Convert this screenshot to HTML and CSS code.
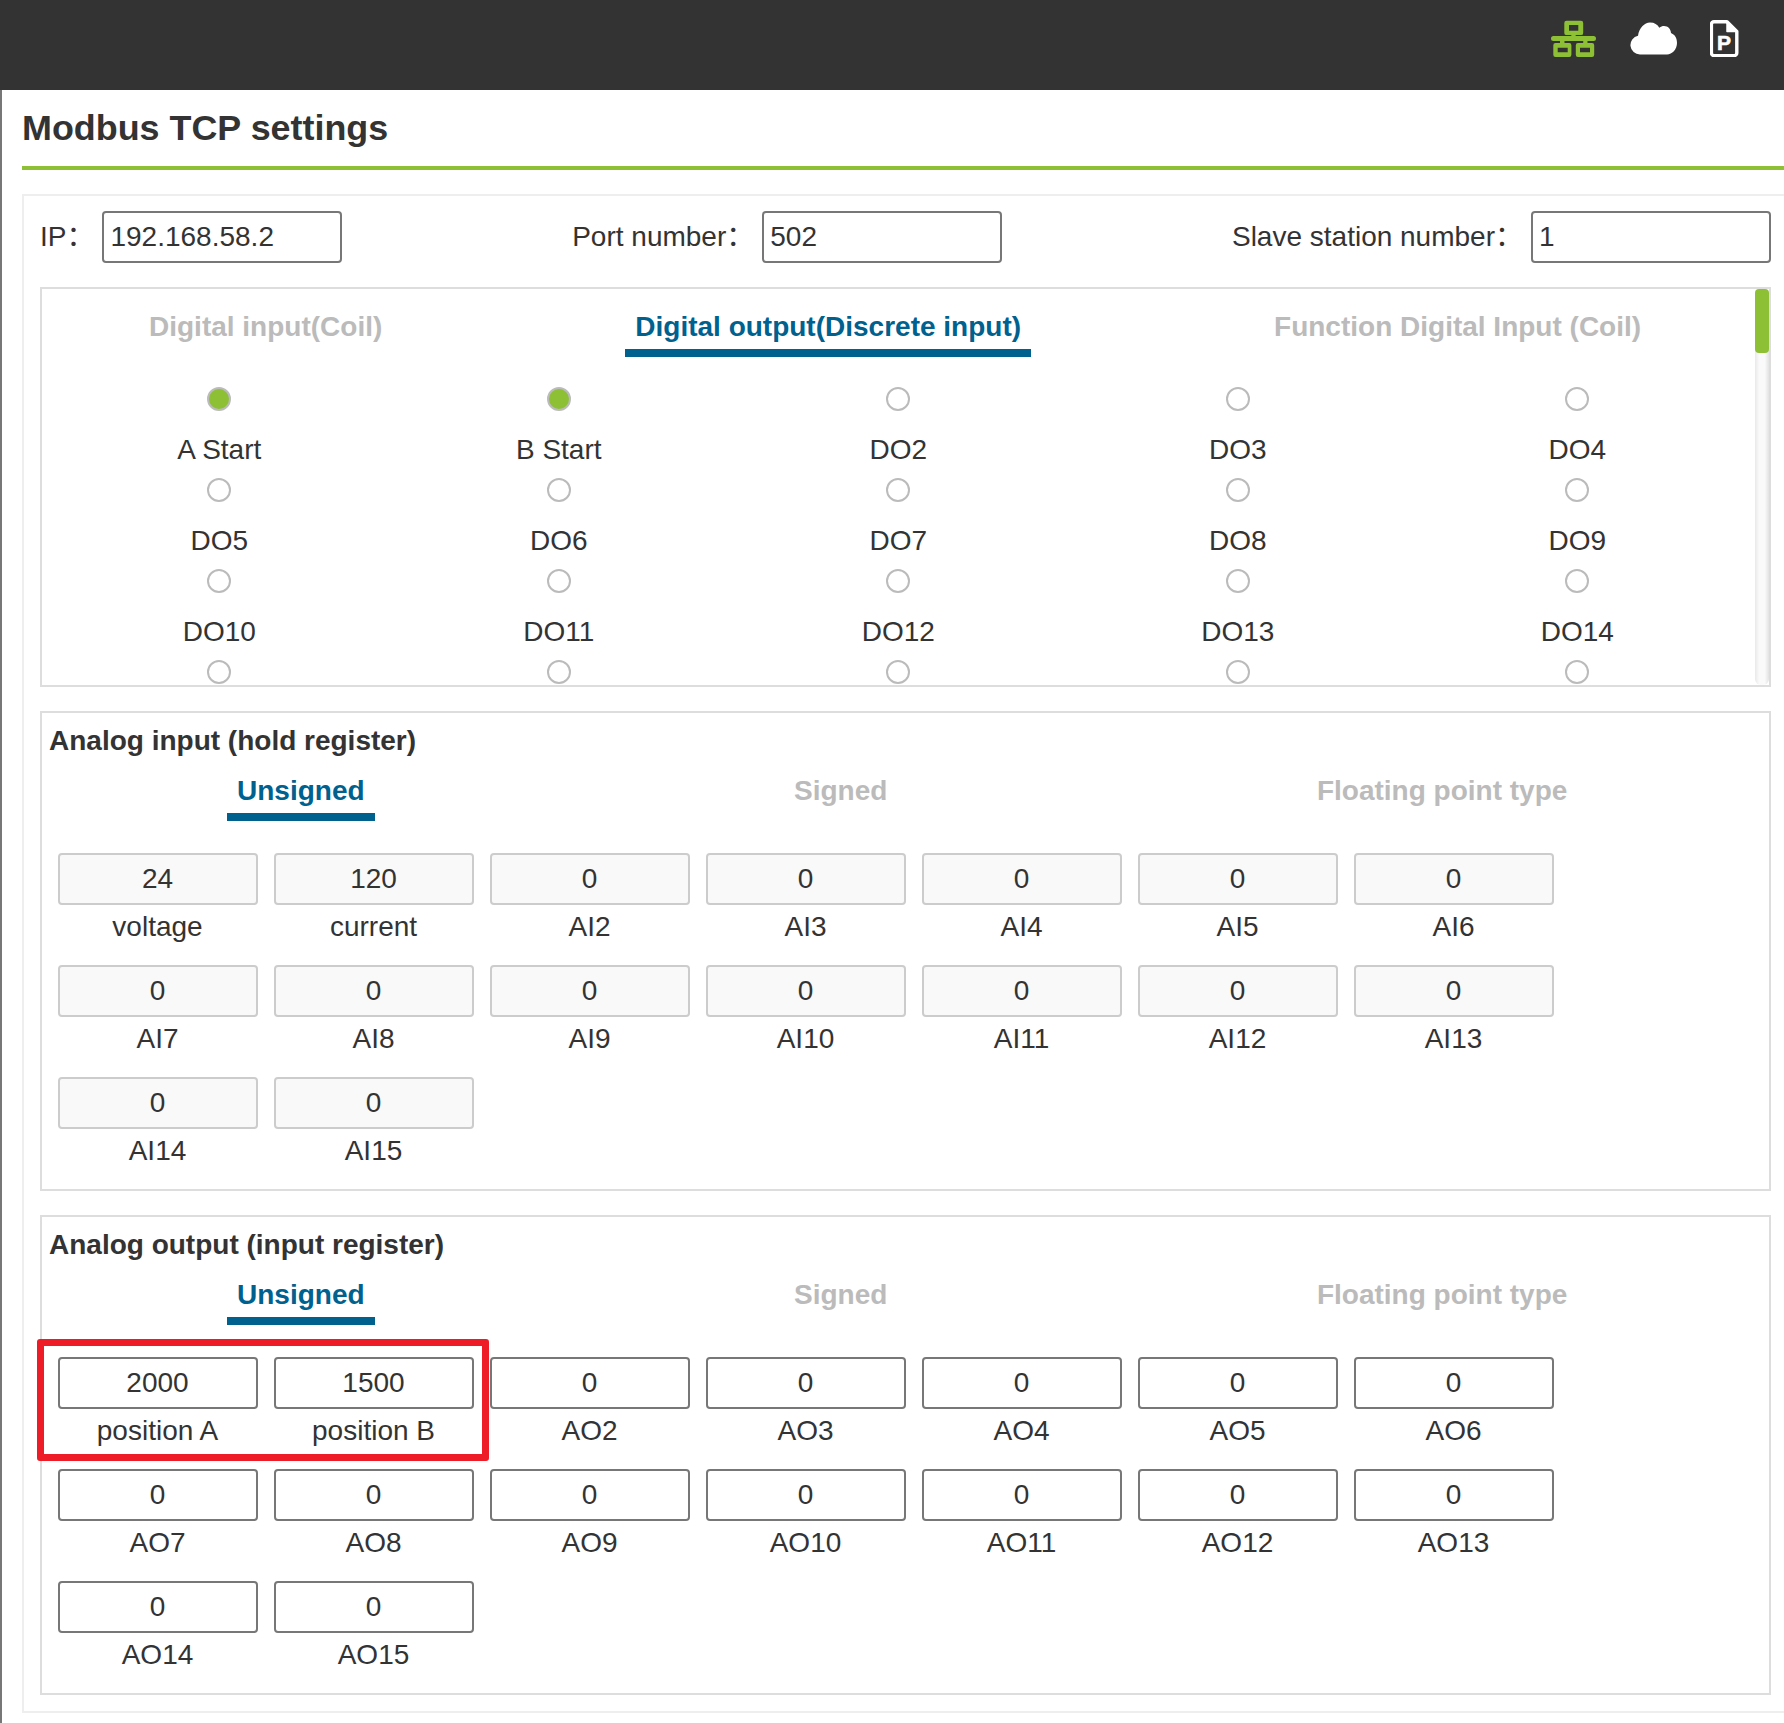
FILE: index.html
```html
<!DOCTYPE html>
<html lang="en">
<head>
<meta charset="utf-8">
<title>Modbus TCP settings</title>
<link rel="stylesheet" href="styles.css">
</head>
<body>
<header class="topbar">
  <svg class="icon icon-net" viewBox="0 0 46 37">
    <path fill-rule="evenodd" d="M15.500.7h14.500a2.200 2.200 0 0 1 2.200 2.200v10a2.200 2.200 0 0 1-2.200 2.200h-5.300V16h17.800a2.500 2.500 0 0 1 0 5h-6v2h4.500a2.200 2.200 0 0 1 2.200 2.200v9.600a2.200 2.200 0 0 1-2.200 2.200H27a2.200 2.200 0 0 1-2.200-2.200v-9.600A2.200 2.200 0 0 1 27 23h5.200v-2H13.500v2h4.700a2.200 2.200 0 0 1 2.200 2.200v9.600a2.200 2.200 0 0 1-2.200 2.200H4.500a2.200 2.200 0 0 1-2.200-2.200v-9.600A2.200 2.200 0 0 1 4.500 23H9v-2H2.500a2.500 2.500 0 0 1 0-5h17.800v-.9h-4.800a2.200 2.200 0 0 1-2.200-2.200v-10A2.200 2.200 0 0 1 15.500.7zM18 5v5.700h9.300V5zM6.700 27.700v4.600h10v-4.600zM29 27.700v4.600h10v-4.600z"/>
  </svg>
  <svg class="icon icon-cloud" viewBox="0 0 47 33">
    <path d="M10 32.500a9.500 9.500 0 0 1-2-18.800C9 6 14.500.5 20 .5c4.500 0 7.500 2 9.300 5.200 1.500-1.200 3-1.700 4.700-1.700 4 0 6.800 2.800 7 7 3.500 1.500 6 4.500 6 10 0 6.500-5 11.500-10 11.500z"/>
  </svg>
  <svg class="icon icon-doc" viewBox="0 0 29 37">
    <path d="M4 1.700h13l9.800 9.800V33a2.600 2.600 0 0 1-2.600 2.600H4A2.600 2.600 0 0 1 1.400 33V4.300A2.600 2.600 0 0 1 4 1.700z" fill="none" stroke="#fff" stroke-width="3.400" stroke-linejoin="round"/>
    <path d="M17 1.700v9.800h9.800z" fill="#fff" stroke="#fff" stroke-width="1.500" stroke-linejoin="round"/>
    <text class="icon-doc-letter" x="14" y="30">P</text>
  </svg>
</header>

<main class="page">
  <h1 class="page-title">Modbus TCP settings</h1>

  <section class="outer">
    <div class="conn-row">
      <div class="conn-field">
        <span class="conn-label">IP：</span>
        <div class="field">192.168.58.2</div>
      </div>
      <div class="conn-field">
        <span class="conn-label">Port number：</span>
        <div class="field">502</div>
      </div>
      <div class="conn-field">
        <span class="conn-label">Slave station number：</span>
        <div class="field">1</div>
      </div>
    </div>

    <div class="panel panel-digital">
      <div class="tabs tabs-digital">
        <div class="tab">Digital input(Coil)</div>
        <div class="tab tab-active">Digital output(Discrete input)</div>
        <div class="tab">Function Digital Input (Coil)</div>
      </div>
      <div class="radio-grid">
        <div class="radio-cell"><span class="radio radio-on"></span><span class="radio-label">A Start</span></div>
        <div class="radio-cell"><span class="radio radio-on"></span><span class="radio-label">B Start</span></div>
        <div class="radio-cell"><span class="radio"></span><span class="radio-label">DO2</span></div>
        <div class="radio-cell"><span class="radio"></span><span class="radio-label">DO3</span></div>
        <div class="radio-cell"><span class="radio"></span><span class="radio-label">DO4</span></div>
        <div class="radio-cell"><span class="radio"></span><span class="radio-label">DO5</span></div>
        <div class="radio-cell"><span class="radio"></span><span class="radio-label">DO6</span></div>
        <div class="radio-cell"><span class="radio"></span><span class="radio-label">DO7</span></div>
        <div class="radio-cell"><span class="radio"></span><span class="radio-label">DO8</span></div>
        <div class="radio-cell"><span class="radio"></span><span class="radio-label">DO9</span></div>
        <div class="radio-cell"><span class="radio"></span><span class="radio-label">DO10</span></div>
        <div class="radio-cell"><span class="radio"></span><span class="radio-label">DO11</span></div>
        <div class="radio-cell"><span class="radio"></span><span class="radio-label">DO12</span></div>
        <div class="radio-cell"><span class="radio"></span><span class="radio-label">DO13</span></div>
        <div class="radio-cell"><span class="radio"></span><span class="radio-label">DO14</span></div>
        <div class="radio-cell"><span class="radio"></span></div>
        <div class="radio-cell"><span class="radio"></span></div>
        <div class="radio-cell"><span class="radio"></span></div>
        <div class="radio-cell"><span class="radio"></span></div>
        <div class="radio-cell"><span class="radio"></span></div>
      </div>
      <div class="scrollbar"><div class="scrollbar-thumb"></div></div>
    </div>

    <div class="panel panel-analog panel-input">
      <h2 class="panel-title">Analog input (hold register)</h2>
      <div class="tabs tabs-analog">
        <div class="tab tab-active">Unsigned</div>
        <div class="tab">Signed</div>
        <div class="tab">Floating point type</div>
      </div>
      <div class="reg-grid">
        <div class="reg"><div class="reg-value">24</div><div class="reg-label">voltage</div></div>
        <div class="reg"><div class="reg-value">120</div><div class="reg-label">current</div></div>
        <div class="reg"><div class="reg-value">0</div><div class="reg-label">AI2</div></div>
        <div class="reg"><div class="reg-value">0</div><div class="reg-label">AI3</div></div>
        <div class="reg"><div class="reg-value">0</div><div class="reg-label">AI4</div></div>
        <div class="reg"><div class="reg-value">0</div><div class="reg-label">AI5</div></div>
        <div class="reg"><div class="reg-value">0</div><div class="reg-label">AI6</div></div>
        <div class="reg"><div class="reg-value">0</div><div class="reg-label">AI7</div></div>
        <div class="reg"><div class="reg-value">0</div><div class="reg-label">AI8</div></div>
        <div class="reg"><div class="reg-value">0</div><div class="reg-label">AI9</div></div>
        <div class="reg"><div class="reg-value">0</div><div class="reg-label">AI10</div></div>
        <div class="reg"><div class="reg-value">0</div><div class="reg-label">AI11</div></div>
        <div class="reg"><div class="reg-value">0</div><div class="reg-label">AI12</div></div>
        <div class="reg"><div class="reg-value">0</div><div class="reg-label">AI13</div></div>
        <div class="reg"><div class="reg-value">0</div><div class="reg-label">AI14</div></div>
        <div class="reg"><div class="reg-value">0</div><div class="reg-label">AI15</div></div>
      </div>
    </div>

    <div class="panel panel-analog panel-output">
      <h2 class="panel-title">Analog output (input register)</h2>
      <div class="tabs tabs-analog">
        <div class="tab tab-active">Unsigned</div>
        <div class="tab">Signed</div>
        <div class="tab">Floating point type</div>
      </div>
      <div class="reg-grid reg-grid-output">
        <div class="highlight"></div>
        <div class="reg"><div class="reg-value">2000</div><div class="reg-label">position A</div></div>
        <div class="reg"><div class="reg-value">1500</div><div class="reg-label">position B</div></div>
        <div class="reg"><div class="reg-value">0</div><div class="reg-label">AO2</div></div>
        <div class="reg"><div class="reg-value">0</div><div class="reg-label">AO3</div></div>
        <div class="reg"><div class="reg-value">0</div><div class="reg-label">AO4</div></div>
        <div class="reg"><div class="reg-value">0</div><div class="reg-label">AO5</div></div>
        <div class="reg"><div class="reg-value">0</div><div class="reg-label">AO6</div></div>
        <div class="reg"><div class="reg-value">0</div><div class="reg-label">AO7</div></div>
        <div class="reg"><div class="reg-value">0</div><div class="reg-label">AO8</div></div>
        <div class="reg"><div class="reg-value">0</div><div class="reg-label">AO9</div></div>
        <div class="reg"><div class="reg-value">0</div><div class="reg-label">AO10</div></div>
        <div class="reg"><div class="reg-value">0</div><div class="reg-label">AO11</div></div>
        <div class="reg"><div class="reg-value">0</div><div class="reg-label">AO12</div></div>
        <div class="reg"><div class="reg-value">0</div><div class="reg-label">AO13</div></div>
        <div class="reg"><div class="reg-value">0</div><div class="reg-label">AO14</div></div>
        <div class="reg"><div class="reg-value">0</div><div class="reg-label">AO15</div></div>
      </div>
    </div>
  </section>
</main>
</body>
</html>
```

FILE: styles.css
```css
* { box-sizing: border-box; }

html, body {
  margin: 0;
  height: 1723px;
  overflow: hidden;
  background: #fff;
}

body {
  font-family: "Liberation Sans", Arial, "Noto Sans CJK SC", sans-serif;
  font-size: 28px;
  color: #333;
}

.topbar {
  height: 90px;
  background: #333;
  display: flex;
  justify-content: flex-end;
  align-items: flex-start;
  padding-top: 20px;
  padding-right: 45px;
}

.icon { display: block; flex: none; }
.icon-net { width: 46px; height: 37px; fill: #8dc035; margin-right: 33px; }
.icon-cloud { width: 47px; height: 33px; margin-top: 2px; fill: #fff; margin-right: 33px; }
.icon-doc { width: 29px; height: 37px; }
.icon-doc-letter {
  font-family: "Liberation Sans", Arial, sans-serif;
  font-size: 21px;
  font-weight: 700;
  fill: #fff;
  stroke: #fff;
  stroke-width: 0.6px;
  text-anchor: middle;
}

.page {
  height: 1633px;
  border-left: 2px solid #777;
  padding-left: 20px;
  overflow: hidden;
}

.page-title {
  margin: 0 0 24px;
  padding: 17px 0 17px;
  height: 80px;
  font-size: 35.900px;
  line-height: 42px;
  font-weight: 700;
  color: #333;
  border-bottom: 4px solid #8dc035;
}

.outer {
  width: 1767px;
  height: 1519px;
  border: 2px solid #eee;
  padding: 15px 16px 0;
}

.conn-row {
  display: flex;
  justify-content: space-between;
  height: 52px;
  margin-bottom: 24px;
}

.conn-field { display: flex; align-items: center; }
.conn-label { line-height: 52px; white-space: nowrap; margin-right: 8px; }

.field {
  width: 240px;
  height: 52px;
  border: 2px solid #777;
  border-radius: 4px;
  padding-left: 6px;
  line-height: 48px;
  color: #333;
}

.panel {
  border: 2px solid #ddd;
  position: relative;
  overflow: hidden;
}

.panel-digital { height: 400px; padding-top: 17px; margin-bottom: 24px; }
.panel-analog { height: 480px; padding: 8px 7px 0; }
.panel-input { margin-bottom: 24px; }
.panel-output { overflow: visible; }

.tabs { display: flex; }
.tabs-digital { gap: 233px; padding-left: 97px; }
.tabs-analog { gap: 409.500px; padding-left: 178px; margin-top: 9px; }

.tab {
  font-size: 28px;
  font-weight: 700;
  line-height: 40px;
  color: #bbb;
  padding: 1px 10px 2px;
  border-bottom: 8px solid transparent;
  white-space: nowrap;
}

.tab-active { color: #00618f; border-bottom-color: #00618f; }

.radio-grid {
  display: grid;
  grid-template-columns: repeat(5, 339.500px);
  grid-auto-rows: 91px;
  padding-left: 7.500px;
  margin-top: 30px;
}

.radio-cell {
  display: flex;
  flex-direction: column;
  align-items: center;
}

.radio {
  width: 24px;
  height: 24px;
  border-radius: 50%;
  border: 2px solid #bbb;
  background: #fff;
  flex: none;
}

.radio-on { background: #8dc035; }
.radio-label { line-height: 40px; margin-top: 19px; }

.scrollbar {
  position: absolute;
  top: 0;
  right: 0;
  bottom: 0;
  width: 14px;
  background: linear-gradient(to right, #e9e9e9, #fafafa 30%, #fafafa 70%, #e2e2e2);
  border-radius: 6px;
}

.scrollbar-thumb {
  height: 64px;
  background: #8dc035;
  border-radius: 4px;
}

.panel-title {
  margin: 0;
  font-size: 28px;
  line-height: 40px;
  font-weight: 700;
  color: #333;
}

.reg-grid {
  position: relative;
  display: grid;
  grid-template-columns: repeat(7, 200px);
  column-gap: 16px;
  row-gap: 16px;
  grid-auto-rows: 96px;
  padding-left: 9px;
  margin-top: 32px;
}

.reg { text-align: center; position: relative; }

.reg-value {
  height: 52px;
  border: 2px solid #ccc;
  border-radius: 4px;
  background: #f9f9f9;
  line-height: 48px;
  padding-right: 1px;
}

.reg-grid-output .reg-value { border-color: #777; background: #fff; }

.reg-label { line-height: 44px; padding-right: 1px; }

.highlight {
  position: absolute;
  left: -12px;
  top: -18px;
  width: 452px;
  height: 122px;
  border: 7px solid #ee1c27;
  border-radius: 3px;
  z-index: 1;
  pointer-events: none;
}
```
